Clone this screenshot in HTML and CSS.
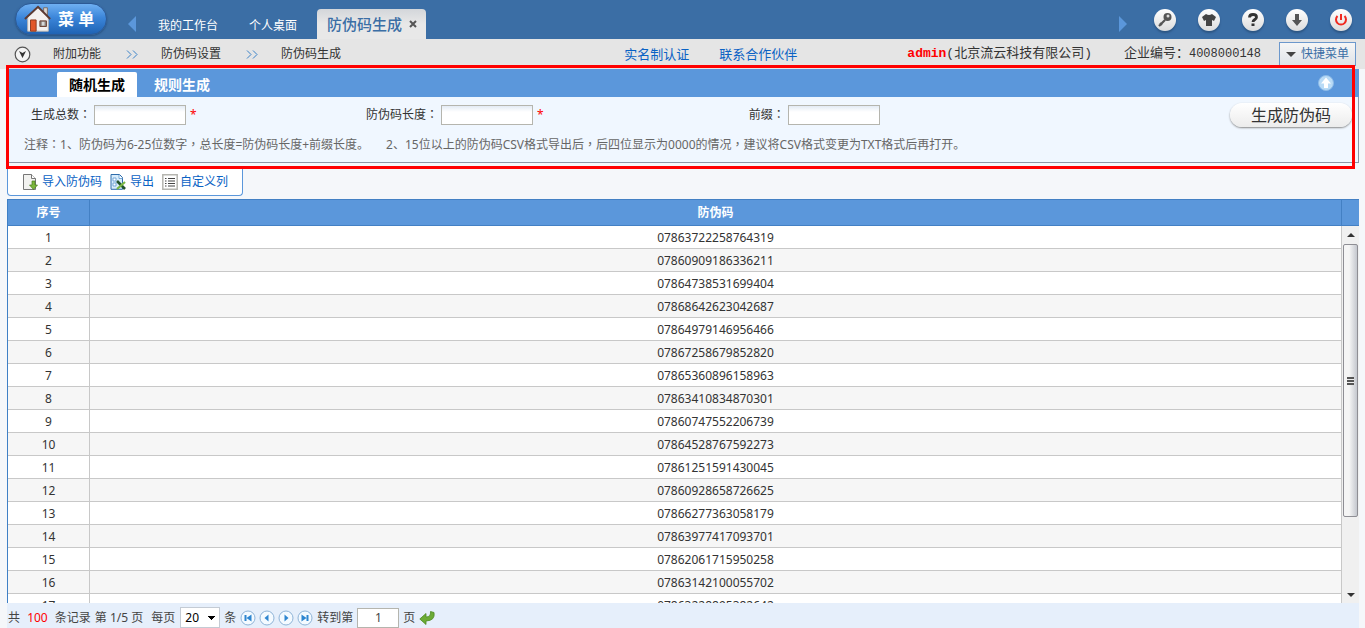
FILE: index.html
```html
<!DOCTYPE html>
<html lang="zh-CN">
<head>
<meta charset="utf-8">
<title>防伪码生成</title>
<link rel="stylesheet" href="styles.css">
</head>
<body>
<header class="top">
  <button class="menu" type="button">
    <svg class="house" viewBox="0 0 32 32" aria-hidden="true">
      <path d="M22 4h4v9h-4z" fill="#d9d4cf" stroke="#776a63"/>
      <path d="M5 14 16 4l11 10v15H5z" fill="#f4f1ef" stroke="#b9b4b0"/>
      <path d="M2 16 16 3l13 13" fill="none" stroke="#5d3a32" stroke-width="2"/>
      <path d="M8 17h6v12H8z" fill="#e2572a" stroke="#8b3a20"/>
      <path d="M18 18h7v6h-7z" fill="#8d8680" stroke="#6b3f30"/>
      <path d="M20 19h3v4h-3z" fill="#d8d8d8"/>
    </svg>
    <span>菜 单</span>
  </button>
  <button class="arrow arrow-left" type="button" aria-label="向左"></button>
  <nav class="tabs">
    <a class="tab" href="#">我的工作台</a>
    <a class="tab" href="#">个人桌面</a>
    <a class="tab tab-on" href="#">防伪码生成
      <svg class="close" viewBox="0 0 8 8" aria-hidden="true"><path d="M1 1l6 6M7 1 1 7" stroke="#555" stroke-width="2"/></svg>
    </a>
  </nav>
  <button class="arrow arrow-right" type="button" aria-label="向右"></button>
  <div class="tools">
    <button class="round" type="button" aria-label="密码"><svg viewBox="0 0 22 22"><circle cx="13.500" cy="8" r="4" fill="#555"/><circle cx="14" cy="7" r="1.500" fill="#ddd"/><path d="M11 11l-6 6M6 14l2 2" stroke="#555" stroke-width="2.200"/></svg></button>
    <button class="round" type="button" aria-label="皮肤"><svg viewBox="0 0 22 22"><path d="M8 5q3 2 6 0l4 3-2 4-2-1v6H8v-6l-2 1-2-4z" fill="#444"/></svg></button>
    <button class="round" type="button" aria-label="帮助"><svg viewBox="0 0 22 22"><path d="M7.500 8.500q0-3 3.500-3t3.500 2.800c0 2.200-3.500 2.200-3.500 4.700" fill="none" stroke="#333" stroke-width="2.800"/><path d="M9.500 14.500h3V17h-3z" fill="#333"/></svg></button>
    <button class="round" type="button" aria-label="下载"><svg viewBox="0 0 22 22"><path d="M9 5h4v6h3l-5 6-5-6h3z" fill="#555"/></svg></button>
    <button class="round" type="button" aria-label="退出"><svg viewBox="0 0 22 22"><path d="M7.500 7a5 5 0 1 0 7 0M11 5v6" fill="none" stroke="#f02a20" stroke-width="2"/></svg></button>
  </div>
</header>

<div class="crumbs">
  <button class="toggle" type="button" aria-label="展开"><svg viewBox="0 0 17 17"><circle cx="8.500" cy="8.500" r="7.300" fill="#f4f4f4" stroke="#555" stroke-width="1.200"/><path d="M5 5l3.500 7L12 5 8.500 7z" fill="#333"/></svg></button>
  <span class="crumb">附加功能</span>
  <svg class="sep" viewBox="0 0 12 9" aria-hidden="true"><path d="M1 0.500l4 4-4 4M7 0.500l4 4-4 4" fill="none" stroke="#3a82c8"/></svg>
  <span class="crumb">防伪码设置</span>
  <svg class="sep" viewBox="0 0 12 9" aria-hidden="true"><path d="M1 0.500l4 4-4 4M7 0.500l4 4-4 4" fill="none" stroke="#3a82c8"/></svg>
  <span class="crumb crumb-last">防伪码生成</span>
  <div class="account">
    <a href="#">实名制认证</a>
    <a href="#">联系合作伙伴</a>
    <span class="user"><b>admin</b>(北京流云科技有限公司)</span>
    <span class="company">企业编号：<span class="num">4008000148</span></span>
    <button class="quick" type="button"><i></i>快捷菜单</button>
  </div>
</div>

<main class="page">
  <section class="marked">
    <div class="panel">
      <div class="panel-head">
        <button class="ptab ptab-on" type="button">随机生成</button>
        <button class="ptab" type="button">规则生成</button>
        <button class="fold" type="button" aria-label="收起"><svg viewBox="0 0 16 16"><circle cx="8" cy="8" r="7.500" fill="#b9dbf6" stroke="#8dbbe8"/><path d="M8 2.500l5 6h-3V13H6V8.500H3z" fill="#fff"/></svg></button>
      </div>
      <form class="form">
        <div class="form-row">
          <div class="fields">
            <div class="field"><label for="total">生成总数<span class="mid" lang="zh-TW">：</span></label><input id="total" type="text"><em>*</em></div>
            <div class="field"><label for="len">防伪码长度<span class="mid" lang="zh-TW">：</span></label><input id="len" type="text"><em>*</em></div>
            <div class="field"><label for="prefix">前缀<span class="mid" lang="zh-TW">：</span></label><input id="prefix" type="text"></div>
          </div>
          <button class="make" type="button">生成防伪码</button>
        </div>
        <p class="note"><span>注释<span class="mid" lang="zh-TW">：</span>1、防伪码为6-25位数字<span class="mid" lang="zh-TW">，</span>总长度=防伪码长度+前缀长度。</span><span>2、15位以上的防伪码CSV格式导出后<span class="mid" lang="zh-TW">，</span>后四位显示为0000的情况<span class="mid" lang="zh-TW">，</span>建议将CSV格式变更为TXT格式后再打开。</span></p>
      </form>
    </div>
  </section>

  <div class="actions">
    <a href="#"><svg viewBox="0 0 16 16" aria-hidden="true"><path d="M1.500.500h8l4 4v11h-12z" fill="#f2f2f0" stroke="#777"/><path d="M9.500.500v4h4" fill="#fff" stroke="#777"/><path d="M10 7h3v4h2.500l-4 4.500-4-4.500H10z" fill="#7cb63c" stroke="#477d1d" stroke-width=".7"/></svg>导入防伪码</a>
    <a href="#"><svg viewBox="0 0 16 16" aria-hidden="true"><path d="M1 .500h8.500l3 3V15.300H1z" fill="#d8ecfb" stroke="#2f6cab"/><path d="M9 1v3.500h3.500M3 4h3v3H3zM3 9h3v3H3z" fill="#fff" stroke="#5b97cf" stroke-width=".8"/><path d="M7 7l8 8" stroke="#22542c" stroke-width="2.600"/><path d="M15 8l-8 7" stroke="#79b843" stroke-width="2.200"/></svg>导出</a>
    <a class="last" href="#"><svg viewBox="0 0 16 16" aria-hidden="true"><path d="M.800.800h14.400v14.400H.800z" fill="#fff" stroke="#b5b5b0" stroke-width="1.500"/><path d="M3 4.500h1.500M3 7h1.500M3 9.500h1.500M3 12h1.500M6 4.500h7M6 7h7M6 9.500h7M6 12h7" stroke="#444"/></svg>自定义列</a>
  </div>

  <section class="grid">
    <div class="rows">
      <table>
        <thead><tr><th class="idx">序号</th><th>防伪码</th></tr></thead>
        <tbody>
          <tr><td>1</td><td>07863722258764319</td></tr>
          <tr><td>2</td><td>07860909186336211</td></tr>
          <tr><td>3</td><td>07864738531699404</td></tr>
          <tr><td>4</td><td>07868642623042687</td></tr>
          <tr><td>5</td><td>07864979146956466</td></tr>
          <tr><td>6</td><td>07867258679852820</td></tr>
          <tr><td>7</td><td>07865360896158963</td></tr>
          <tr><td>8</td><td>07863410834870301</td></tr>
          <tr><td>9</td><td>07860747552206739</td></tr>
          <tr><td>10</td><td>07864528767592273</td></tr>
          <tr><td>11</td><td>07861251591430045</td></tr>
          <tr><td>12</td><td>07860928658726625</td></tr>
          <tr><td>13</td><td>07866277363058179</td></tr>
          <tr><td>14</td><td>07863977417093701</td></tr>
          <tr><td>15</td><td>07862061715950258</td></tr>
          <tr><td>16</td><td>07863142100055702</td></tr>
          <tr><td>17</td><td>07863228895382642</td></tr>
        </tbody>
      </table>
    </div>
    <div class="side">
      <div class="side-head"></div>
      <div class="scroll">
        <i class="up"></i>
        <div class="thumb"><i></i></div>
        <i class="down"></i>
      </div>
    </div>
  </section>

  <footer class="pager">
    <span class="total">共 <b>100</b> 条记录</span>
    <span class="at">第 1/5 页</span>
    <label for="size">每页</label>
    <select id="size"><option>20</option></select>
    <span>条</span>
    <div class="steps">
      <button type="button" aria-label="首页"><svg viewBox="0 0 16 16"><circle cx="8" cy="8" r="7" fill="#f4faff" stroke="#8fb4d8"/><path d="M4.500 5h2v6h-2zM11.500 4.500v7L6.500 8z" fill="#2f86d0"/></svg></button>
      <button type="button" aria-label="上一页"><svg viewBox="0 0 16 16"><circle cx="8" cy="8" r="7" fill="#f4faff" stroke="#8fb4d8"/><path d="M9.500 4.500v7L5.500 8z" fill="#2f86d0"/></svg></button>
      <button type="button" aria-label="下一页"><svg viewBox="0 0 16 16"><circle cx="8" cy="8" r="7" fill="#f4faff" stroke="#8fb4d8"/><path d="M6.500 4.500v7l4-3.500z" fill="#2f86d0"/></svg></button>
      <button type="button" aria-label="末页"><svg viewBox="0 0 16 16"><circle cx="8" cy="8" r="7" fill="#f4faff" stroke="#8fb4d8"/><path d="M11.500 5h-2v6h2zM4.500 4.500v7l5-3.500z" fill="#2f86d0"/></svg></button>
    </div>
    <label for="goto">转到第</label>
    <input id="goto" type="text" value="1">
    <span>页</span>
    <button class="go" type="button" aria-label="跳转"><svg viewBox="0 0 16 16"><path d="M11.500 1.500l3.500 1q1.500 8-8 8.500v3.500L.800 9 7 3.500V7q5 0 4.500-5.500z" fill="#6cab35" stroke="#4c8a22" stroke-width=".8"/></svg></button>
  </footer>
</main>
</body>
</html>
```

FILE: styles.css
```css
* { box-sizing: border-box; }

body {
  margin: 0;
  height: 100vh;
  display: flex;
  flex-direction: column;
  overflow: hidden;
  background: #f5f7fa;
  color: #333;
  font: 12px/16px "Noto Sans", "Noto Sans CJK SC", sans-serif;
}

button, input, select { font: inherit; color: inherit; }
button { border: 0; padding: 0; background: none; }
a { color: #0a62c4; text-decoration: none; }
svg { display: block; }

/* punctuation centred in its em box */
.mid { font-family: "Noto Sans CJK TC", sans-serif; line-height: 1; }

/* top bar */
.top {
  display: flex;
  align-items: flex-end;
  flex: none;
  height: 39px;
  padding: 0 14px 0 15px;
  background: #3b6ea5;
}
.menu {
  display: flex;
  align-items: center;
  align-self: flex-start;
  width: 92px;
  height: 32px;
  margin-top: 3px;
  padding-left: 7px;
  gap: 5px;
  border: 1px solid #2c5a96;
  border-radius: 16px;
  background: linear-gradient(#6fb0f2, #3c86da 45%, #1f63b4);
  box-shadow: 0 1px 2px #27507e;
  color: #fff;
  font-size: 16px;
  font-weight: bold;
  line-height: 20px;
  white-space: nowrap;
}
.house { width: 30px; height: 30px; flex: none; }
.arrow {
  width: 8px;
  height: 16px;
  margin-bottom: 7px;
  background: #5b97db;
}
.arrow-left { margin-left: 21px; clip-path: polygon(100% 0, 0 50%, 100% 100%); }
.arrow-right { margin-left: auto; clip-path: polygon(0 0, 100% 50%, 0 100%); }
.tabs { display: flex; align-items: flex-end; margin-left: 7px; }
.tab { padding: 0 16px 5px 15px; color: #fff; }
.tab-on {
  display: flex;
  align-items: center;
  gap: 7px;
  height: 30px;
  margin-left: 4px;
  padding: 0 9px 0 10px;
  border-radius: 4px 4px 0 0;
  background: linear-gradient(#d3d6da, #e8e8e8 50%);
  color: #3b6ea5;
  font-size: 15px;
  font-weight: 500;
}
.close { width: 8px; height: 8px; }
.tools { display: flex; gap: 22px; margin: 0 -1px 8px 27px; }
.round {
  width: 22px;
  height: 22px;
  border-radius: 50%;
  background: linear-gradient(#fff, #dcdcdc);
  box-shadow: 0 2px 2px #2c5583;
}

/* breadcrumb bar */
.crumbs {
  display: flex;
  align-items: center;
  flex: none;
  height: 30px;
  padding: 0 9px 0 14px;
  background: #e5e5e5;
}
.toggle, .toggle svg { width: 17px; height: 17px; }
.crumb { margin: 0 25px 0 23px; }
.crumb:first-of-type { margin-left: 22px; }
.crumb-last { margin-right: 0; }
.sep { width: 12px; height: 9px; }
.account {
  display: flex;
  align-items: center;
  margin-left: auto;
  font-size: 13px;
  white-space: nowrap;
}
.account a { margin-right: 30px; }
.account a + a { margin-right: 110px; }
.user, .company { font-family: "Liberation Mono", "Noto Sans CJK SC", monospace; }
.user b { color: #f00; }
.company { margin: 0 18px 0 32px; }
.num { font-size: 12px; }
.quick {
  display: flex;
  align-items: center;
  gap: 5px;
  height: 24px;
  padding: 0 6px;
  border: 1px solid #6c98cc;
  background: linear-gradient(#f6f6f6, #dfe3e8);
  color: #3b6ea5;
  font-size: 12px;
}
.quick i { border: 5px solid transparent; border-top: 5px solid #444; border-bottom: 0; }

/* page body */
.page {
  display: flex;
  flex-direction: column;
  flex: 1;
  min-height: 0;
  padding: 0 6px 0 7px;
}
.marked { position: relative; flex: none; margin-left: 1px; padding-bottom: 6px; }
.marked::after {
  content: "";
  position: absolute;
  inset: -4px 4px 0 -2px;
  border: 3px solid #f00;
  pointer-events: none;
}
.panel { border: 1px solid #8c95a6; border-top: 0; background: #f0f7ff; }
.panel-head {
  display: flex;
  align-items: flex-end;
  height: 28px;
  margin-right: -1px;
  padding-left: 48px;
  background: #5b97db;
}
.ptab { height: 25px; padding: 0 12px; color: #fff; font-size: 14px; font-weight: bold; }
.ptab-on { border-radius: 2px 2px 0 0; background: #fff; color: #000; }
.ptab + .ptab { margin-left: 5px; }
.fold { align-self: center; width: 16px; height: 16px; margin: 0 25px 0 auto; }
.form { padding: 4px 6px 9px 0; }
.form-row { display: flex; align-items: center; justify-content: space-between; height: 27px; }
.fields { display: grid; grid-template-columns: repeat(3, 1fr); width: 77.5%; }
.field { display: flex; align-items: center; }
.field label { width: 85px; padding-right: 3px; text-align: right; white-space: nowrap; }
.field input {
  width: 92px;
  height: 20px;
  border: 1px solid #b5b5ae;
  background: linear-gradient(#e3ebf5, #fff 6px);
}
.field em { margin-left: 4px; color: #f00; font-style: normal; }
.make {
  width: 122px;
  height: 24px;
  border-radius: 12px;
  background: linear-gradient(#fff, #ececec);
  box-shadow: 0 1px 2px #888;
  font-size: 16px;
  line-height: 24px;
  white-space: nowrap;
}
.note { display: flex; gap: 17px; margin: 9px 0 0 15px; color: #666; white-space: nowrap; }

/* toolbar above the table */
.actions {
  display: flex;
  align-items: center;
  align-self: flex-start;
  flex: none;
  gap: 8px;
  height: 27px;
  padding: 0 14px;
  border: 1px solid #5b97db;
  border-top: 0;
  border-radius: 0 0 4px 4px;
  background: #fff;
}
.actions a { display: flex; align-items: center; gap: 4px; }
.actions .last { gap: 2px; }
.actions svg { width: 16px; height: 16px; }

/* table */
.grid { display: flex; flex: 1; min-height: 0; margin-top: 3px; }
.rows { flex: 1; overflow: hidden; border-left: 1px solid #3f80c6; }
table { width: 100%; border-collapse: separate; border-spacing: 0; table-layout: fixed; }
th, td { padding: 0; text-align: center; }
th {
  height: 27px;
  border: solid #4380c4;
  border-width: 1px 1px 1px 0;
  background: #5b97db;
  color: #fff;
}
td { height: 23px; padding-top: 2px; border: solid #c8c8c8; border-width: 0 1px 1px 0; background: #fff; }
tr:nth-child(even) td { background: #f6f6f6; }
.idx { width: 82px; }
.side { display: flex; flex-direction: column; width: 17px; }
.side-head { flex: none; height: 27px; border: solid #4380c4; border-width: 1px 0; background: #5b97db; }
.scroll {
  display: flex;
  flex-direction: column;
  align-items: center;
  flex: 1;
  padding: 7px 0 6px;
  background: #f0f0f0;
}
.up { border: 4px solid transparent; border-top: 0; border-bottom: 4px solid #333; }
.down { margin-top: auto; border: 4px solid transparent; border-bottom: 0; border-top: 4px solid #333; }
.thumb {
  display: flex;
  align-items: center;
  justify-content: center;
  width: 15px;
  height: 75%;
  margin: 7px 0;
  border: 1px solid #8e8e94;
  border-radius: 2px;
  background: linear-gradient(90deg, #f5f5f5 40%, #c4c7ce);
}
.thumb i { width: 7px; height: 8px; background: repeating-linear-gradient(#555 0 2px, #eee 2px 3px); }

/* pager */
.pager {
  display: flex;
  align-items: center;
  flex: none;
  height: 25px;
  padding: 4px 0 0 1px;
  background: #e6effb;
  color: #444;
  white-space: nowrap;
}
.total b { margin: 0 4px; color: #f00; font-weight: normal; }
.at { margin: 0 8px 0 4px; }
.pager select {
  appearance: none;
  width: 40px;
  height: 21px;
  margin: 0 4px 0 5px;
  padding: 0 4px;
  border: 1px solid #c4cbd4;
  border-radius: 0;
  background: linear-gradient(to bottom left, #000 50%, transparent 50%) 27px 8px / 4px 4px no-repeat,
    linear-gradient(to bottom right, #000 50%, transparent 50%) 31px 8px / 4px 4px no-repeat, #fff;
  color: #000;
}
.steps { display: flex; gap: 3px; margin: 0 4px; }
.steps button, .steps svg, .go, .go svg { width: 16px; height: 16px; }
.pager input {
  width: 42px;
  height: 20px;
  margin: 0 4px;
  padding: 0;
  border: 1px solid #b5b5ae;
  background: #fff;
  text-align: center;
}
.go { margin-left: 4px; }
```
